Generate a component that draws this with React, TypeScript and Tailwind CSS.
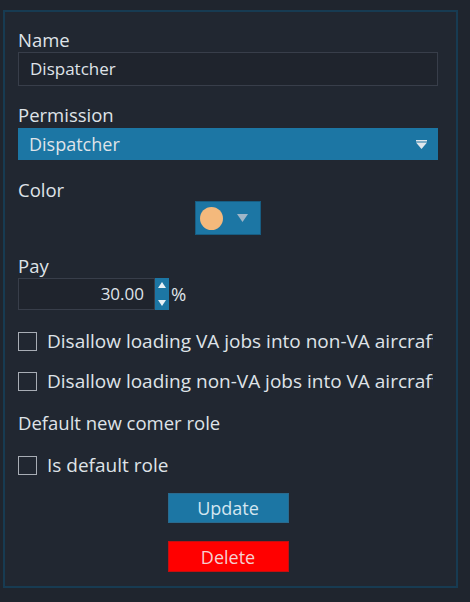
export default function App() {
  const font = { fontFamily: '"Open Sans", "Noto Sans", sans-serif' };
  return (
    <div className="w-[470px] h-[602px] bg-[#1f252e] pt-[10px] pl-[3px]" style={font}>
      <div className="w-[455px] h-[578px] border-2 border-[#173b52] bg-[#212731] pl-[13px] pr-[18px] pt-[17px] flex flex-col text-[#dfe3e8]">
        {/* Name */}
        <div className="h-[22px] leading-[22px] text-[18.5px]">Name</div>
        <div className="mt-[1px] h-[34px] border border-[#383e4a] bg-[#1f242d] pl-[11px] flex items-center text-[17px]">
          Dispatcher
        </div>

        {/* Permission */}
        <div className="mt-[18px] h-[22px] leading-[22px] text-[18.5px]">Permission</div>
        <div className="mt-[2px] h-[32px] bg-[#1c76a4] pl-[11px] pr-[11px] flex items-center justify-between text-[18px]">
          <span>Dispatcher</span>
          <svg width="11" height="9" viewBox="0 0 11 9">
            <rect x="0" y="0" width="11" height="1.5" fill="#dfe6ec" />
            <polygon points="0,2.5 11,2.5 5.5,9" fill="#dfe6ec" />
          </svg>
        </div>

        {/* Color */}
        <div className="mt-[19px] h-[22px] leading-[22px] text-[18.5px]">Color</div>
        <div className="flex justify-center">
          <div className="h-[34px] w-[66px] bg-[#1c76a4] border border-[#175d82] flex items-center pl-[4px] gap-[14px]">
            <div className="w-[23px] h-[23px] rounded-full bg-[#f4b97c]" />
            <svg width="11" height="8" viewBox="0 0 11 8">
              <polygon points="0,0 11,0 5.5,8" fill="#9fb6c8" />
            </svg>
          </div>
        </div>

        {/* Pay */}
        <div className="mt-[20px] h-[22px] leading-[22px] text-[18.5px]">Pay</div>
        <div className="mt-[1px] h-[32px] flex items-center">
          <div className="w-[137px] h-[32px] border border-[#383e4a] bg-[#1f242d] flex items-center justify-end pr-[10px] text-[17px]">
            30.00
          </div>
          <div className="w-[14px] h-[32px] bg-[#1c76a4] flex flex-col items-center justify-between py-[4px]">
            <svg width="8" height="6" viewBox="0 0 8 6">
              <polygon points="4,0 8,6 0,6" fill="#e8f0f5" />
            </svg>
            <svg width="8" height="6" viewBox="0 0 8 6">
              <polygon points="0,0 8,0 4,6" fill="#e8f0f5" />
            </svg>
          </div>
          <span className="ml-[2px] text-[18.5px]">%</span>
        </div>

        {/* Checkboxes */}
        <label className="mt-[20px] h-[22px] w-[415px] flex items-center gap-[10px] text-[19px] whitespace-nowrap overflow-hidden">
          <span className="shrink-0 w-[19px] h-[19px] border border-[#a8adb5]" />
          Disallow loading VA jobs into non-VA aircraft
        </label>
        <label className="mt-[18px] h-[22px] w-[415px] flex items-center gap-[10px] text-[19px] whitespace-nowrap overflow-hidden">
          <span className="shrink-0 w-[19px] h-[19px] border border-[#a8adb5]" />
          Disallow loading non-VA jobs into VA aircraft
        </label>
        <div className="mt-[20px] h-[22px] leading-[22px] text-[18.5px]">Default new comer role</div>
        <label className="mt-[20px] h-[22px] flex items-center gap-[10px] text-[19px] whitespace-nowrap">
          <span className="shrink-0 w-[19px] h-[19px] border border-[#a8adb5]" />
          Is default role
        </label>

        {/* Buttons */}
        <div className="flex flex-col items-center">
          <button className="mt-[17px] w-[121px] h-[30px] bg-[#1c76a4] border border-[#2a6a8e] text-[#d4e6f0] text-[18px] leading-none">
            Update
          </button>
          <button className="mt-[18px] w-[121px] h-[31px] bg-[#ff0000] border border-[#c21010] text-[#f6d0d0] text-[18px] leading-none">
            Delete
          </button>
        </div>
      </div>
    </div>
  );
}
